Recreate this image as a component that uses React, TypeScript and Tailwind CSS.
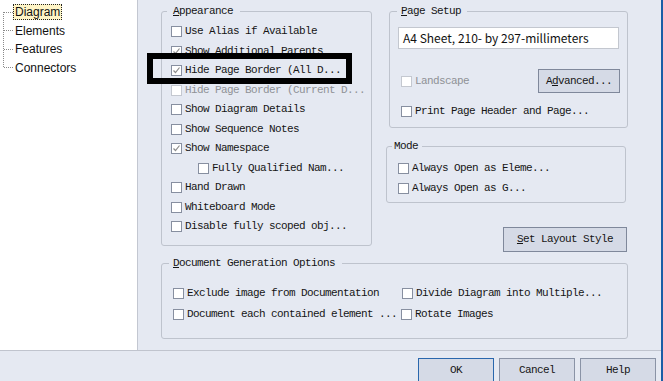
import type { ReactNode } from 'react';

const mono = "font-['Liberation_Mono',monospace] text-[11px] tracking-[-0.6px] leading-[13px]";

function Box({ checked, disabled }: { checked?: boolean; disabled?: boolean }) {
  return (
    <span
      className={`flex h-[11px] w-[11px] shrink-0 items-center justify-center border bg-white ${
        disabled ? 'border-[#C4C8D0]' : 'border-[#878FA0]'
      }`}
    >
      {checked && (
        <svg width="9" height="9" viewBox="0 0 9 9">
          <polyline points="1.5,4.5 3.5,6.5 7.5,1.5" fill="none" stroke="#8C8C8C" strokeWidth="1.2" />
        </svg>
      )}
    </span>
  );
}

function Check({
  label,
  checked,
  disabled,
  className = '',
}: {
  label: string;
  checked?: boolean;
  disabled?: boolean;
  className?: string;
}) {
  return (
    <div className={`flex items-center gap-[3px] ${className}`}>
      <Box checked={checked} disabled={disabled} />
      <span className={`${mono} whitespace-nowrap ${disabled ? 'text-[#8F9196]' : 'text-[#151515]'}`}>{label}</span>
    </div>
  );
}

function Group({
  legend,
  legendClass,
  className,
  children,
}: {
  legend: ReactNode;
  legendClass: string;
  className: string;
  children: ReactNode;
}) {
  return (
    <fieldset className={`rounded-[3px] border border-[#BEC3CD] ${className}`}>
      <legend className={`${mono} leading-[16px] text-[#151515] ${legendClass}`}>{legend}</legend>
      {children}
    </fieldset>
  );
}

function Btn({ children, className = '' }: { children: ReactNode; className?: string }) {
  return (
    <button
      className={`${mono} flex items-center justify-center border bg-[#D5DAE6] text-[#151515] ${className}`}
    >
      {children}
    </button>
  );
}

function Tree() {
  const items = ['Diagram', 'Elements', 'Features', 'Connectors'];
  return (
    <div className="flex w-[138px] shrink-0 border-r border-[#C3C7D1] bg-white pt-[3px]">
      <svg width="13" height="74" className="shrink-0" shapeRendering="crispEdges">
        <line x1="3.5" y1="9" x2="3.5" y2="65" stroke="#8A8A8A" strokeDasharray="1 1" />
        {[9.5, 27.5, 46.5, 64.5].map((y) => (
          <line key={y} x1="4" y1={y} x2="13" y2={y} stroke="#8A8A8A" strokeDasharray="1 1" />
        ))}
      </svg>
      <div className="flex flex-col font-['Liberation_Sans',sans-serif] text-[12px] text-[#111]">
        {items.map((t, i) => (
          <div key={t} className="flex h-[18.5px] items-center">
            {i === 0 ? (
              <span className="border border-dotted border-[#222] bg-[#FFF5C6] px-[1px] leading-[14px]">{t}</span>
            ) : (
              <span className="pl-[2px] leading-[14px]">{t}</span>
            )}
          </div>
        ))}
      </div>
    </div>
  );
}

export default function App() {
  return (
    <div className="relative flex h-[381px] w-[663px] flex-col overflow-hidden border-r-2 border-[#1B5DA6] bg-[#E5E9F2]">
      <div className="flex h-[350px] shrink-0">
        <Tree />
        <div className="flex-1 pl-[23px]">
          <div className="flex h-[246px] items-start">
            <Group
              className="mt-[3px] h-[243px] w-[211px]"
              legendClass="ml-[5px] pl-[6px] pr-[7px]"
              legend={
                <>
                  <span className="underline">A</span>ppearance
                </>
              }
            >
              <div className="flex flex-col pl-[9px] pt-[3px]">
                <Check className="h-[19.5px]" label="Use Alias if Available" />
                <Check className="h-[19.5px]" label="Show Additional Parents" checked />
                <Check className="h-[19.5px]" label="Hide Page Border (All D..." checked />
                <Check className="h-[19.5px]" label="Hide Page Border (Current D..." disabled />
                <Check className="h-[19.5px]" label="Show Diagram Details" />
                <Check className="h-[19.5px]" label="Show Sequence Notes" />
                <Check className="h-[19.5px]" label="Show Namespace" checked />
                <Check className="h-[19.5px] pl-[27px]" label="Fully Qualified Nam..." />
                <Check className="h-[19.5px]" label="Hand Drawn" />
                <Check className="h-[19.5px]" label="Whiteboard Mode" />
                <Check className="h-[19.5px]" label="Disable fully scoped obj..." />
              </div>
            </Group>

            <div className="ml-[17px] mt-[3px] flex w-[239px] flex-col">
              <Group
                className="h-[125px] w-[239px]"
                legendClass="ml-[7px] pl-[4px] pr-[6px]"
                legend={
                  <>
                    <span className="underline">P</span>age Setup
                  </>
                }
              >
                <div className="ml-[8px] mt-[8px] flex h-[22px] w-[221px] items-center border border-[#C3C7CF] bg-white pl-[4px] font-['Noto_Sans_CJK_SC',sans-serif] text-[12px] text-[#111]">
                  A4 Sheet, 210- by 297-millimeters
                </div>
                <div className="mt-[20px] flex h-[24px] items-center justify-between pl-[11px] pr-[7px]">
                  <Check label="Landscape" disabled />
                  <Btn className="h-[24px] w-[82px] border-[#7F889B]">
                    <span>
                      A<span className="underline">d</span>vanced...
                    </span>
                  </Btn>
                </div>
                <Check className="mt-[8px] h-[20px] pl-[11px]" label="Print Page Header and Page..." />
              </Group>

              <Group className="ml-[-3px] mt-[10px] h-[65px] w-[240px]" legendClass="ml-[5px] pl-[2px] pr-[4px]" legend="Mode">
                <div className="flex flex-col pl-[11px] pt-[5px]">
                  <Check className="h-[19.5px]" label="Always Open as Eleme..." />
                  <Check className="h-[19.5px]" label="Always Open as G..." />
                </div>
              </Group>

              <Btn className="mr-[1px] mt-[24px] h-[25px] w-[124px] self-end border-[#7F889B]">
                <span>
                  <span className="underline">S</span>et Layout Style
                </span>
              </Btn>
            </div>
          </div>

          <Group
            className="mt-[9px] h-[84px] w-[467px]"
            legendClass="ml-[7px] pl-[4px] pr-[7px]"
            legend={
              <>
                <span className="underline">D</span>ocument Generation Options
              </>
            }
          >
            <div className="grid grid-cols-[229px_1fr] pl-[11px] pt-[12px]">
              <Check className="h-[21px]" label="Exclude image from Documentation" />
              <Check className="h-[21px]" label="Divide Diagram into Multiple..." />
              <Check className="h-[21px]" label="Document each contained element ..." />
              <Check className="ml-[-1px] h-[21px]" label="Rotate Images" />
            </div>
          </Group>
        </div>
      </div>

      <div className="flex flex-1 justify-end gap-[5px] border-t border-[#C0C4CE] pr-[5px] pt-[7px]">
        <Btn className="h-[24px] w-[76px] shrink-0 border-[#2A67AD]">OK</Btn>
        <Btn className="h-[24px] w-[76px] shrink-0 border-[#8A93A6]">Cancel</Btn>
        <Btn className="h-[24px] w-[76px] shrink-0 border-[#8A93A6]">Help</Btn>
      </div>

      <div className="absolute left-[147px] top-[53px] h-[31px] w-[205px] border-[6px] border-black" />
    </div>
  );
}
